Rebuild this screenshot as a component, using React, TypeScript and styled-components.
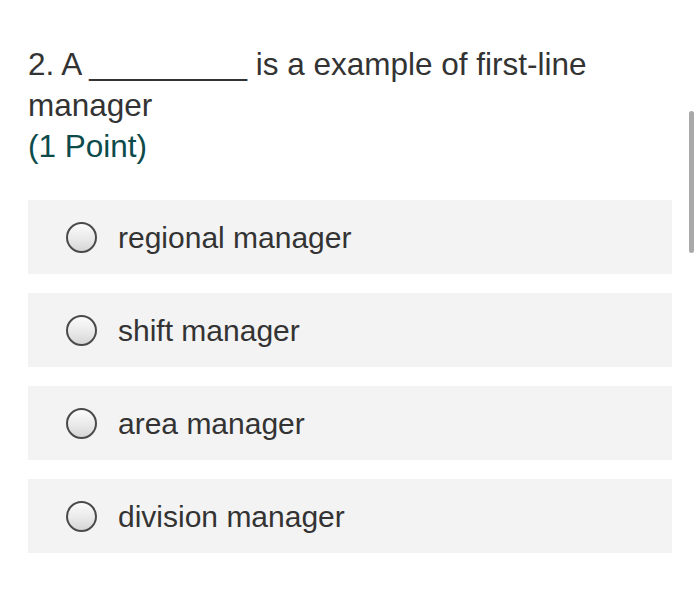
import styled, { createGlobalStyle } from 'styled-components'

const GlobalStyle = createGlobalStyle`
  html, body {
    margin: 0;
    padding: 0;
    background: #ffffff;
  }
  body {
    font-family: 'Liberation Sans', Arial, Helvetica, sans-serif;
    color: #333333;
  }
`

const Page = styled.div`
  position: relative;
  width: 700px;
  height: 614px;
  box-sizing: border-box;
  padding: 44px 28px 0 28px;
  overflow: hidden;
`

const Question = styled.div`
  font-size: 31.5px;
  line-height: 41px;
  color: #333333;
`

const Points = styled.div`
  color: #0d4b4b;
`

const Options = styled.ul`
  list-style: none;
  margin: 33px 0 0 0;
  padding: 0;
  display: flex;
  flex-direction: column;
  gap: 19px;
`

const Option = styled.li`
  display: flex;
  align-items: center;
  gap: 21px;
  height: 74px;
  padding-left: 38px;
  background: #f3f3f3;
`

const Radio = styled.span`
  width: 27px;
  height: 27px;
  border-radius: 50%;
  border: 2px solid #4a4a4a;
  background: linear-gradient(180deg, #fbfbfb 0%, #e9e9e9 55%, #d6d6d6 100%);
  flex-shrink: 0;
`

const Label = styled.span`
  font-size: 30px;
  color: #333333;
  margin-top: 2px;
`

const Scrollbar = styled.div`
  position: absolute;
  top: 111px;
  left: 689px;
  width: 5px;
  height: 142px;
  border-radius: 3px;
  background: #a9a9a9;
`

const options = ['regional manager', 'shift manager', 'area manager', 'division manager']

const App = () => {
  return (
    <>
      <GlobalStyle />
      <Page>
        <Question>
          2. A _________ is a example of first-line manager
          <Points>(1 Point)</Points>
        </Question>
        <Options>
          {options.map((text) => (
            <Option key={text}>
              <Radio aria-hidden="true" />
              <Label>{text}</Label>
            </Option>
          ))}
        </Options>
        <Scrollbar />
      </Page>
    </>
  )
}

export default App
